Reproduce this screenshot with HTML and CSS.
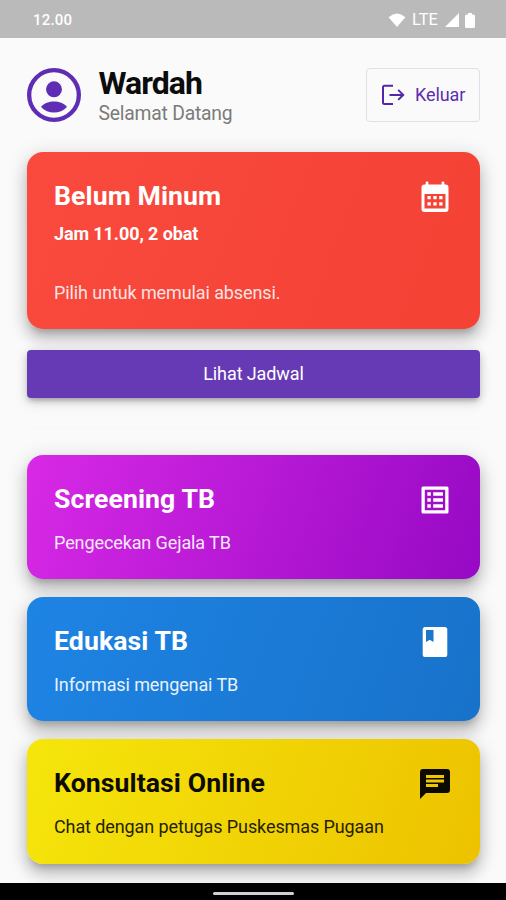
FILE: index.html
```html
<!DOCTYPE html>
<html lang="id">
<head>
<meta charset="utf-8">
<meta name="viewport" content="width=device-width, initial-scale=1">
<title>Beranda</title>
<link rel="stylesheet" href="styles.css">
</head>
<body>
<div class="screen">
  <div class="status">
    <span class="clock">12.00</span>
    <div class="signals">
      <svg class="wifi" viewBox="0 0 18 15"><path d="M.6 4.200Q9-3 17.400 4.200L9 14z"/></svg>
      <span class="network">LTE</span>
      <svg class="cell" viewBox="0 0 14 14"><path d="M14 0v14H0z"/></svg>
      <svg class="battery" viewBox="0 0 10 15"><path d="M3 0h4v1.6h1.4Q10 1.6 10 3.2v10.2Q10 15 8.4 15H1.6Q0 15 0 13.400V3.200Q0 1.600 1.600 1.600H3z"/></svg>
    </div>
  </div>

  <main class="content">
    <header class="header">
      <svg class="avatar" viewBox="2 2 20 20">
        <circle cx="12" cy="12" r="9.200"/>
        <circle class="fill" cx="12" cy="9.900" r="2.950"/>
        <path class="fill" d="M7.200 16.400C8.300 15 10.200 14.400 12 14.400s3.700.6 4.800 2C15.500 17.800 13.800 18.500 12 18.500s-3.500-.7-4.800-2.100z"/>
      </svg>
      <div class="who">
        <h1 class="name">Wardah</h1>
        <p class="greeting">Selamat Datang</p>
      </div>
      <button class="logout">
        <svg viewBox="0 0 24 22"><path d="M12 1.700H3.500Q2 1.700 2 3.200v15.400Q2 20.100 3.500 20.100H12M8.500 10.900H22M17.200 5.900l5 5-5 5"/></svg>
        <span>Keluar</span>
      </button>
    </header>

    <section class="card dose">
      <div class="row">
        <h2 class="title">Belum Minum</h2>
        <svg class="icon calendar" viewBox="0 0 24 24"><path fill-rule="evenodd" d="M19 3.700h-.8V2.400a.7.7 0 0 0-.7-.7h-.4a.7.700 0 0 0-.7.7v1.300H7.600V2.400a.7.700 0 0 0-.7-.7h-.4a.7.700 0 0 0-.7.7v1.300H5a2 2 0 0 0-2 2V20a2 2 0 0 0 2 2h14a2 2 0 0 0 2-2V5.700a2 2 0 0 0-2-2zm0 16H5V10h14zM7 11.300h2.200v2.200H7zm3.900 0h2.200v2.200h-2.200zm3.900 0H17v2.200h-2.200zM7 15.500h2.200v2.200H7zm3.900 0h2.200v2.200h-2.200zm3.900 0H17v2.200h-2.200z"/></svg>
      </div>
      <p class="when">Jam 11.00, 2 obat</p>
      <p class="text pilih">Pilih untuk memulai absensi.</p>
    </section>

    <button class="schedule">Lihat Jadwal</button>
    <hr class="rule">

    <nav class="menu">
      <section class="card screening">
        <div class="row">
          <h2 class="title">Screening TB</h2>
          <svg class="icon" viewBox="0 0 24 24"><path fill-rule="evenodd" d="M20 3H4a1 1 0 0 0-1 1v16a1 1 0 0 0 1 1h16a1 1 0 0 0 1-1V4a1 1 0 0 0-1-1zm-1.200 15.800H5.200V5.200h13.600zM10.800 6.900h6.500v2.300h-6.500zm0 4h6.500v2.300h-6.500zm0 4h6.500v2.300h-6.500zM6.900 6.900h2.300v2.300H6.900zm0 4h2.300v2.300H6.900zm0 4h2.300v2.300H6.900z"/></svg>
        </div>
        <p class="text">Pengecekan Gejala TB</p>
      </section>
      <section class="card education">
        <div class="row">
          <h2 class="title">Edukasi TB</h2>
          <svg class="icon" viewBox="0 0 24 24"><path fill-rule="evenodd" d="M18.500 2h-13A1.500 1.500 0 0 0 3.800 3.700v16.600A1.700 1.700 0 0 0 5.500 22h13a1.700 1.700 0 0 0 1.700-1.700V3.700A1.700 1.700 0 0 0 18.500 2zM6 4h5v8l-2.500-1.500L6 12z"/></svg>
        </div>
        <p class="text">Informasi mengenai TB</p>
      </section>
      <section class="card consult">
        <div class="row">
          <h2 class="title">Konsultasi Online</h2>
          <svg class="icon" viewBox="0 0 24 24"><path fill-rule="evenodd" d="M20 2H4a2 2 0 0 0-2 2v18l4-4h14a2 2 0 0 0 2-2V4a2 2 0 0 0-2-2zM6 9h12v2H6zm8 5H6v-2h8zm4-6H6V6h12z"/></svg>
        </div>
        <p class="text">Chat dengan petugas Puskesmas Pugaan</p>
      </section>
    </nav>
  </main>

  <footer class="gesture"><div class="pill"></div></footer>
</div>
</body>
</html>
```
FILE: styles.css
```css
* { box-sizing: border-box; }
body, h1, h2, p { margin: 0; }
body { font-family: Roboto, "Liberation Sans", sans-serif; background: #fafafa; }
.screen { width: 506px; height: 900px; display: flex; flex-direction: column; overflow: hidden; }
.status { height: 37.500px; flex: none; display: flex; justify-content: space-between; align-items: center; padding: 3px 31px 0 33px; background: #bababa; color: #fff; }
.clock { font: 500 15px/20px Roboto, sans-serif; letter-spacing: .2px; }
.signals { display: flex; align-items: center; gap: 6.500px; }
.signals svg { fill: #fff; display: block; }
.wifi { width: 18px; height: 15px; }
.network { font-size: 16.500px; line-height: 20px; }
.cell { width: 14px; height: 14px; }
.battery { width: 10px; height: 15px; }

.content { flex: 1; min-height: 0; padding: 30px 26px 0 27px; }
.header { display: flex; align-items: flex-start; height: 54px; margin-bottom: 30px; }
.avatar { width: 54px; height: 54px; fill: none; stroke: #5e2db3; stroke-width: 1.600; }
.avatar .fill { fill: #5e2db3; stroke: none; }
.who { flex: 1; margin-left: 17.500px; white-space: nowrap; }
.name { font-size: 32px; line-height: 31px; font-weight: 700; color: #0c0c0c; letter-spacing: -.95px; }
.greeting { font-size: 19.300px; line-height: 29px; color: #7b7b7b; letter-spacing: -.2px; }
.logout { width: 114px; height: 54px; display: flex; align-items: center; gap: 10px; padding: 0 0 0 14px; border: 1px solid #e1e1e4; border-radius: 4px; background: transparent; color: #5a2fae; font: 400 18px/24px Roboto, sans-serif; letter-spacing: -.1px; }
.logout svg { width: 24px; height: 22px; fill: none; stroke: #5327ab; stroke-width: 2; }

.card { border-radius: 16px; padding: 27px 27px 0; color: #fff; white-space: nowrap; box-shadow: 0 7px 7px -4px rgba(0,0,0,.2), 0 11px 14px 1px rgba(0,0,0,.14), 0 4px 19px 3px rgba(0,0,0,.12); }
.row { display: flex; justify-content: space-between; height: 36px; }
.title { font-size: 26.670px; line-height: 34px; font-weight: 700; letter-spacing: .07px; }
.icon { width: 36px; height: 36px; fill: currentColor; flex: none; }
.when { font-size: 18px; line-height: 24px; font-weight: 700; letter-spacing: -.1px; margin-top: 7px; }
.text { font-size: 18px; line-height: 24px; letter-spacing: -.1px; margin-top: 13px; opacity: .9; }
.dose { height: 177.500px; background: linear-gradient(110deg, #f94a3d, #f44235); }
.pilih { margin-top: 35px; opacity: .85; }
.schedule { display: block; width: 100%; height: 48px; margin-top: 20.500px; padding: 0; border: 0; border-radius: 4px; background: #673ab5; color: #fff; font: 400 18px/24px Roboto, sans-serif; letter-spacing: -.1px; box-shadow: 0 4px 4px -2px rgba(0,0,0,.2), 0 3px 8px rgba(0,0,0,.14), 0 4px 14px rgba(0,0,0,.12); position: relative; }
.rule { height: 1px; border: 0; margin: 29px 0 27.200px; background: #f7f7f7; }
.menu { display: grid; gap: 18.200px; }
.menu .card { height: 124.200px; }
.screening { background: linear-gradient(110deg, #d829e6, #9609c4); }
.education { background: linear-gradient(110deg, #1e84e4, #1872ca); }
.consult { background: linear-gradient(110deg, #f5e60b, #edc200); }
.consult.card { color: #0d0b00; }
.gesture { height: 17.500px; flex: none; background: #000; display: flex; justify-content: center; padding-top: 9.500px; position: relative; }
.pill { width: 81px; height: 3px; border-radius: 1.500px; background: #d0d0d0; }
```
